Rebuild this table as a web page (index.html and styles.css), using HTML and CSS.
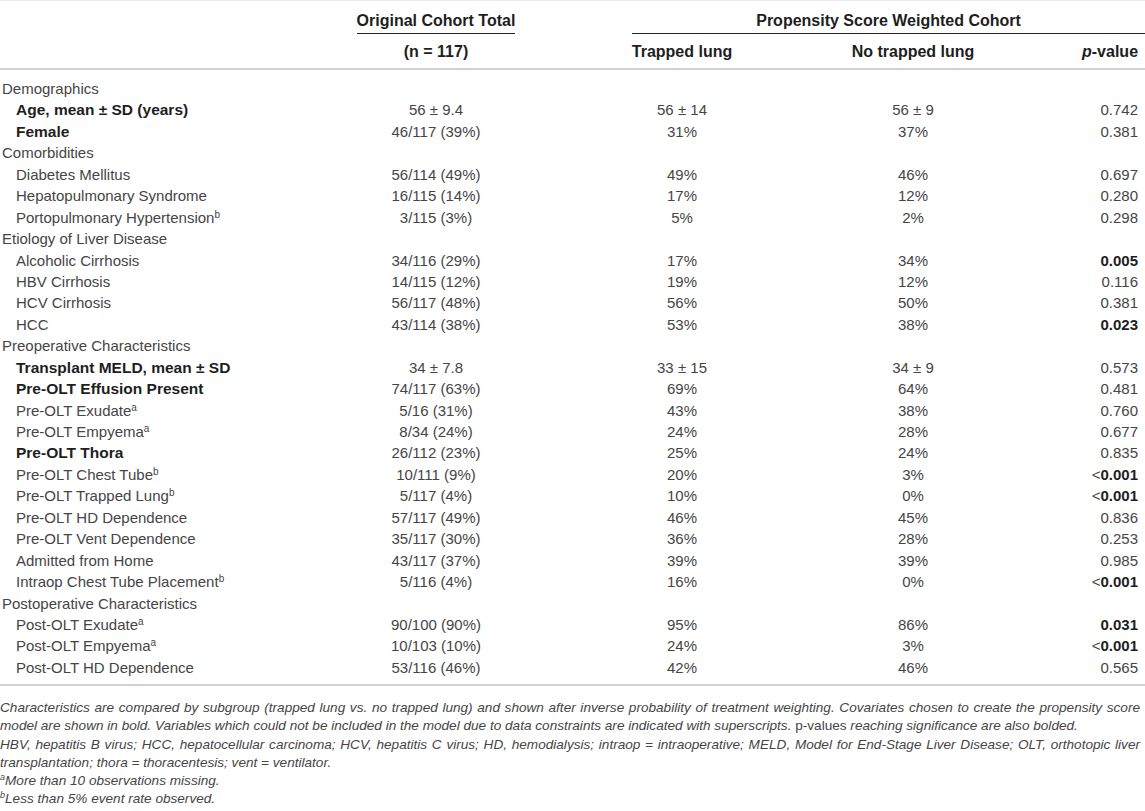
FILE: index.html
```html
<!DOCTYPE html>
<html>
<head>
<meta charset="utf-8">
<link rel="stylesheet" href="styles.css">
</head>
<body>
<div class="page">
<table class="tbl">
  <colgroup>
    <col class="c-label"><col class="c-orig"><col class="c-trap"><col class="c-notrap"><col class="c-p">
  </colgroup>
  <thead>
    <tr class="h1">
      <th></th>
      <th><span class="uline">Original Cohort Total</span></th>
      <th colspan="3"><div class="ps">Propensity Score Weighted Cohort</div></th>
    </tr>
    <tr class="h2">
      <th></th>
      <th>(n = 117)</th>
      <th>Trapped lung</th>
      <th>No trapped lung</th>
      <th class="r"><i>p</i>-value</th>
    </tr>
  </thead>
  <tbody>
    <tr class="cat first"><td>Demographics</td><td></td><td></td><td></td><td></td></tr>
    <tr><td class="sub b">Age, mean ± SD (years)</td><td>56 ± 9.4</td><td>56 ± 14</td><td>56 ± 9</td><td class="r">0.742</td></tr>
    <tr><td class="sub b">Female</td><td>46/117 (39%)</td><td>31%</td><td>37%</td><td class="r">0.381</td></tr>
    <tr class="cat"><td>Comorbidities</td><td></td><td></td><td></td><td></td></tr>
    <tr><td class="sub">Diabetes Mellitus</td><td>56/114 (49%)</td><td>49%</td><td>46%</td><td class="r">0.697</td></tr>
    <tr><td class="sub">Hepatopulmonary Syndrome</td><td>16/115 (14%)</td><td>17%</td><td>12%</td><td class="r">0.280</td></tr>
    <tr><td class="sub">Portopulmonary Hypertension<sup>b</sup></td><td>3/115 (3%)</td><td>5%</td><td>2%</td><td class="r">0.298</td></tr>
    <tr class="cat"><td>Etiology of Liver Disease</td><td></td><td></td><td></td><td></td></tr>
    <tr><td class="sub">Alcoholic Cirrhosis</td><td>34/116 (29%)</td><td>17%</td><td>34%</td><td class="r"><b>0.005</b></td></tr>
    <tr><td class="sub">HBV Cirrhosis</td><td>14/115 (12%)</td><td>19%</td><td>12%</td><td class="r">0.116</td></tr>
    <tr><td class="sub">HCV Cirrhosis</td><td>56/117 (48%)</td><td>56%</td><td>50%</td><td class="r">0.381</td></tr>
    <tr><td class="sub">HCC</td><td>43/114 (38%)</td><td>53%</td><td>38%</td><td class="r"><b>0.023</b></td></tr>
    <tr class="cat"><td>Preoperative Characteristics</td><td></td><td></td><td></td><td></td></tr>
    <tr><td class="sub b">Transplant MELD, mean ± SD</td><td>34 ± 7.8</td><td>33 ± 15</td><td>34 ± 9</td><td class="r">0.573</td></tr>
    <tr><td class="sub b">Pre-OLT Effusion Present</td><td>74/117 (63%)</td><td>69%</td><td>64%</td><td class="r">0.481</td></tr>
    <tr><td class="sub">Pre-OLT Exudate<sup>a</sup></td><td>5/16 (31%)</td><td>43%</td><td>38%</td><td class="r">0.760</td></tr>
    <tr><td class="sub">Pre-OLT Empyema<sup>a</sup></td><td>8/34 (24%)</td><td>24%</td><td>28%</td><td class="r">0.677</td></tr>
    <tr><td class="sub b">Pre-OLT Thora</td><td>26/112 (23%)</td><td>25%</td><td>24%</td><td class="r">0.835</td></tr>
    <tr><td class="sub">Pre-OLT Chest Tube<sup>b</sup></td><td>10/111 (9%)</td><td>20%</td><td>3%</td><td class="r">&lt;<b>0.001</b></td></tr>
    <tr><td class="sub">Pre-OLT Trapped Lung<sup>b</sup></td><td>5/117 (4%)</td><td>10%</td><td>0%</td><td class="r">&lt;<b>0.001</b></td></tr>
    <tr><td class="sub">Pre-OLT HD Dependence</td><td>57/117 (49%)</td><td>46%</td><td>45%</td><td class="r">0.836</td></tr>
    <tr><td class="sub">Pre-OLT Vent Dependence</td><td>35/117 (30%)</td><td>36%</td><td>28%</td><td class="r">0.253</td></tr>
    <tr><td class="sub">Admitted from Home</td><td>43/117 (37%)</td><td>39%</td><td>39%</td><td class="r">0.985</td></tr>
    <tr><td class="sub">Intraop Chest Tube Placement<sup>b</sup></td><td>5/116 (4%)</td><td>16%</td><td>0%</td><td class="r">&lt;<b>0.001</b></td></tr>
    <tr class="cat"><td>Postoperative Characteristics</td><td></td><td></td><td></td><td></td></tr>
    <tr><td class="sub">Post-OLT Exudate<sup>a</sup></td><td>90/100 (90%)</td><td>95%</td><td>86%</td><td class="r"><b>0.031</b></td></tr>
    <tr><td class="sub">Post-OLT Empyema<sup>a</sup></td><td>10/103 (10%)</td><td>24%</td><td>3%</td><td class="r">&lt;<b>0.001</b></td></tr>
    <tr class="last"><td class="sub">Post-OLT HD Dependence</td><td>53/116 (46%)</td><td>42%</td><td>46%</td><td class="r">0.565</td></tr>
  </tbody>
</table>
<div class="notes">
  <p class="note">Characteristics are compared by subgroup (trapped lung vs. no trapped lung) and shown after inverse probability of treatment weighting. Covariates chosen to create the propensity score model are shown in bold. Variables which could not be included in the model due to data constraints are indicated with superscripts. <span class="up">p-values</span> reaching significance are also bolded.</p>
  <p class="note">HBV, hepatitis B virus; HCC, hepatocellular carcinoma; HCV, hepatitis C virus; HD, hemodialysis; intraop = intraoperative; MELD, Model for End-Stage Liver Disease; OLT, orthotopic liver transplantation; thora = thoracentesis; vent = ventilator.</p>
  <p class="note"><sup>a</sup>More than 10 observations missing.</p>
  <p class="note"><sup>b</sup>Less than 5% event rate observed.</p>
</div>
</div>
</body>
</html>
```

FILE: styles.css
```css
html, body {
  margin: 0;
  padding: 0;
  background: #ffffff;
}
body {
  font-family: "Liberation Sans", Arial, Helvetica, sans-serif;
  color: #454545;
  font-size: 15px;
}
.page {
  width: 1145px;
  border-top: 1px solid #ececec;
}
.tbl {
  width: 1145px;
  border-collapse: collapse;
  table-layout: fixed;
}
.c-label { width: 340px; }
.c-orig { width: 192px; }
.c-trap { width: 300px; }
.c-notrap { width: 162px; }
.c-p { width: 151px; }

.tbl th {
  font-weight: bold;
  font-size: 16px;
  color: #1e1e1e;
  text-align: center;
  padding: 0;
  line-height: 21px;
}
.tbl td {
  padding: 0;
  line-height: 21.44px;
  text-align: center;
  white-space: nowrap;
}
.tbl td:first-child {
  text-align: left;
  padding-left: 2px;
}
.tbl td.sub {
  padding-left: 16px;
}
.tbl .b {
  font-weight: bold;
  font-size: 15.5px;
  color: #1e1e1e;
}
.tbl b {
  color: #1e1e1e;
}
.tbl .r {
  text-align: right;
  padding-right: 7px;
}
.h1 th {
  padding-top: 9px;
  vertical-align: bottom;
}
.uline {
  display: inline-block;
  border-bottom: 1.5px solid #222;
  padding-bottom: 2px;
}
.ps {
  margin-left: 100px;
  border-bottom: 1.5px solid #222;
  padding-bottom: 2px;
  text-align: center;
}
.h2 th {
  padding-top: 7px;
  padding-bottom: 6px;
  border-bottom: 2px solid #d0d0d0;
}
.first td {
  padding-top: 8px;
}
.last td {
  padding-bottom: 6px;
  border-bottom: 2px solid #d0d0d0;
}
sup {
  font-size: 10px;
  line-height: 0;
  vertical-align: 5px;
  font-weight: normal;
}
.notes {
  padding-top: 13px;
}
.note {
  margin: 0;
  font-style: italic;
  font-size: 13.6px;
  line-height: 18.2px;
  color: #454545;
  text-align: justify;
  padding-right: 5px;
}
.note sup {
  font-size: 9px;
  vertical-align: 5px;
}
.up {
  font-style: normal;
}
```
